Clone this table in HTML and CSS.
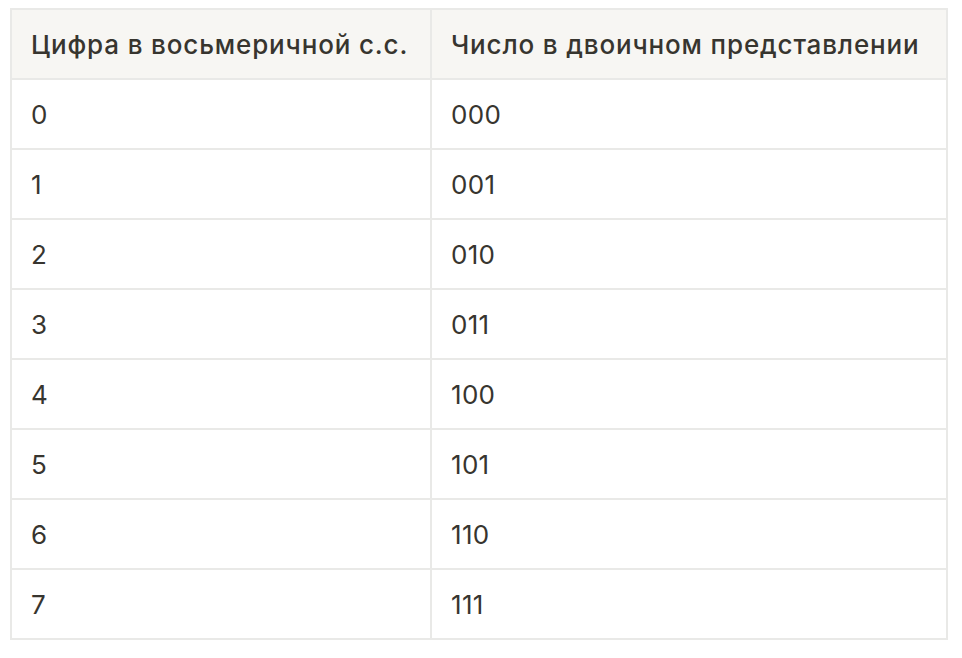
FILE: index.html
```html
<!DOCTYPE html>
<html lang="ru">
<head>
<meta charset="utf-8">
<link rel="stylesheet" href="styles.css">
</head>
<body>
<table class="tbl">
  <colgroup><col class="c1"><col class="c2"></colgroup>
  <thead>
    <tr><th>Цифра в восьмеричной с.с.</th><th>Число в двоичном представлении</th></tr>
  </thead>
  <tbody>
    <tr><td>0</td><td>000</td></tr>
    <tr><td>1</td><td>001</td></tr>
    <tr><td>2</td><td>010</td></tr>
    <tr><td>3</td><td>011</td></tr>
    <tr><td>4</td><td>100</td></tr>
    <tr><td>5</td><td>101</td></tr>
    <tr><td>6</td><td>110</td></tr>
    <tr><td>7</td><td>111</td></tr>
  </tbody>
</table>
</body>
</html>
```
FILE: styles.css
```css
html, body {
  margin: 0;
  background: #ffffff;
}
body {
  padding: 8px 0 0 10px;
  font-family: Inter, "Noto Sans", sans-serif;
  color: #37352f;
}
.tbl {
  border-collapse: collapse;
  table-layout: fixed;
  width: 938px;
}
.c1 { width: 420px; }
.c2 { width: auto; }
.tbl th, .tbl td {
  border: 2px solid #e9e9e7;
  height: 70px;
  padding: 0 19px 0 19px;
  text-align: left;
  vertical-align: middle;
  font-size: 26px;
  letter-spacing: 0.3px;
  box-sizing: border-box;
  white-space: nowrap;
}
.tbl th {
  background: #f7f6f3;
  font-weight: 500;
  font-size: 26px;
  letter-spacing: 0.85px;
}
.tbl td {
  font-weight: 400;
}
```
